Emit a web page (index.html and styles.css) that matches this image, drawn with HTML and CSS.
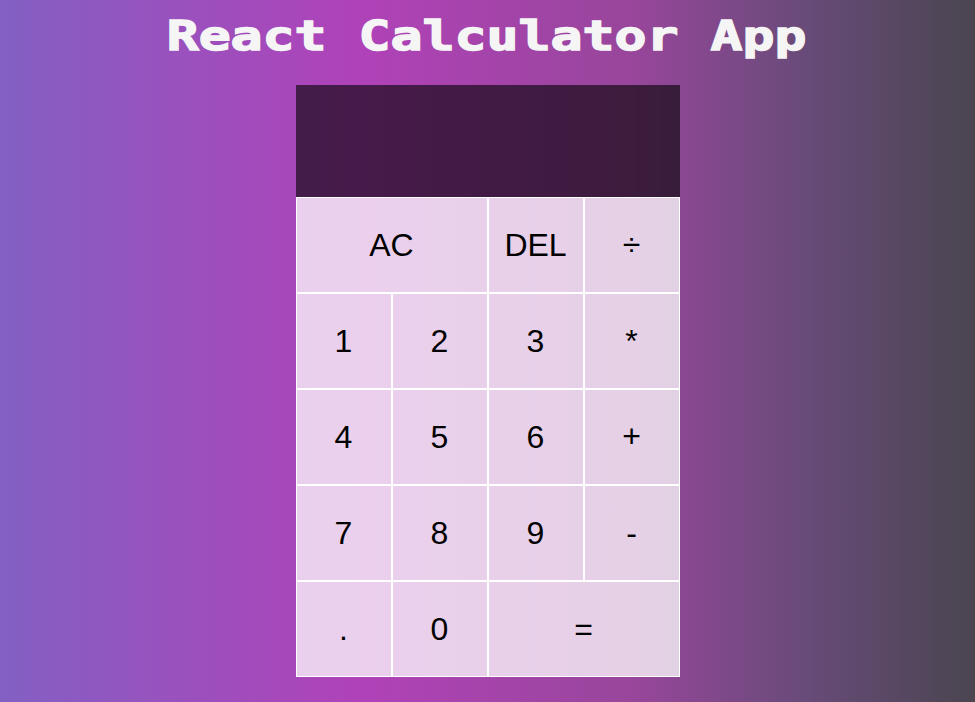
FILE: index.html
```html
<!DOCTYPE html>
<html lang="en">
<head>
<meta charset="utf-8">
<title>React Calculator App</title>
<link rel="stylesheet" href="styles.css">
</head>
<body>
<h1 class="title">React Calculator App</h1>
<main class="calculator">
  <div class="output"></div>
  <button class="span-two">AC</button>
  <button>DEL</button>
  <button class="symbol">÷</button>
  <button>1</button>
  <button>2</button>
  <button>3</button>
  <button>*</button>
  <button>4</button>
  <button>5</button>
  <button>6</button>
  <button class="symbol">+</button>
  <button>7</button>
  <button>8</button>
  <button>9</button>
  <button>-</button>
  <button>.</button>
  <button>0</button>
  <button class="span-two">=</button>
</main>
</body>
</html>
```
FILE: styles.css
```css
*, *::before, *::after {
  box-sizing: border-box;
}

body {
  margin: 0;
  height: 702px;
  overflow: hidden;
  background: linear-gradient(to right, #8360c3 0%, #b042b8 37%, #98469b 65%, #684b79 82.5%, #4a4550 100%);
}

.title {
  width: fit-content;
  height: 85px;
  margin: 0 auto;
  padding: 12px 2px 0 0;
  color: #f5f5f5;
  font: bold 41px/48px "DejaVu Sans Mono", monospace;
  text-align: center;
  white-space: nowrap;
  transform: scaleX(1.296);
  -webkit-text-stroke: 1.4px #f5f5f5;
}

.calculator {
  display: grid;
  justify-content: center;
  grid-template-columns: repeat(4, 96px);
  grid-template-rows: 112px repeat(5, 96px);
  margin-left: 1px;
}

.output {
  grid-column: 1 / -1;
  background: rgba(0, 0, 0, 0.6);
}

.calculator button {
  padding: 0 1px 0 0;
  border: 1px solid #fff;
  border-radius: 0;
  background: rgba(255, 255, 255, 0.75);
  color: #000;
  font: 32px "Liberation Sans", Arial, sans-serif;
}

.calculator .symbol {
  padding-bottom: 2px;
}

.calculator .span-two {
  grid-column: span 2;
}
```
